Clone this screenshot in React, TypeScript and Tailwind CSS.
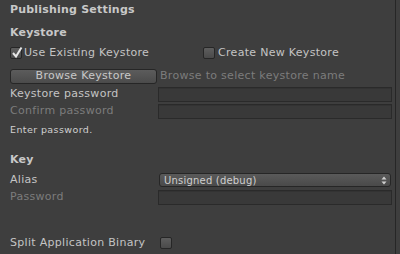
import React from "react";

const font = { fontFamily: '"DejaVu Sans", "Liberation Sans", sans-serif' };

function Check({ checked }: { checked?: boolean }) {
  return (
    <div className="relative w-[12px] h-[12px] rounded-[2px] border border-[#262626] bg-gradient-to-b from-[#5e5e5e] to-[#4a4a4a] shrink-0">
      {checked && (
        <svg className="absolute left-[0px] top-[-2px]" width="12" height="13" viewBox="0 0 12 13">
          <path d="M2 7 L5 10.5 L10.5 1.5" stroke="#e6e6e6" strokeWidth="2" fill="none" />
        </svg>
      )}
    </div>
  );
}

function Field() {
  return <div className="w-[234px] h-[15px] bg-[#393939] border border-[#2a2a2a] shadow-[inset_0_1px_0_#333]" />;
}

export default function App() {
  return (
    <div className="relative w-[400px] h-[254px] bg-[#3e3e3e] overflow-hidden text-[11px] tracking-[0.3px] text-[#c4c4c4]" style={font}>
      <div className="absolute right-[4px] top-0 w-[1px] h-full bg-[#262626]" />
      <div className="flex flex-col pl-[10px] pt-[1px]">
        <div className="h-[18px] flex items-center font-bold text-[#c8c8c8] tracking-[0.2px]">Publishing Settings</div>
        <div className="h-[18px] mt-[5px] flex items-center font-bold text-[#c8c8c8] tracking-[0.2px]">Keystore</div>
        <div className="h-[14px] mt-[4px] flex items-center">
          <div className="w-[193px] flex items-center gap-[2px]">
            <Check checked />
            <span>Use Existing Keystore</span>
          </div>
          <div className="flex items-center gap-[3px]">
            <Check />
            <span>Create New Keystore</span>
          </div>
        </div>
        <div className="h-[15px] mt-[9px] flex items-center">
          <div className="w-[147px] h-[15px] rounded-[3px] border border-[#262626] bg-gradient-to-b from-[#5c5c5c] to-[#4b4b4b] flex items-center justify-center text-[#c8c8c8]">
            Browse Keystore
          </div>
          <span className="ml-[3px] text-[#7c7c7c]">Browse to select keystore name</span>
        </div>
        <div className="h-[15px] mt-[3px] flex items-center">
          <span className="w-[148px]">Keystore password</span>
          <Field />
        </div>
        <div className="h-[15px] mt-[2px] flex items-center">
          <span className="w-[148px] text-[#7c7c7c]">Confirm password</span>
          <Field />
        </div>
        <div className="h-[14px] mt-[4px] flex items-center text-[9.5px] tracking-[0.4px] text-[#d0d0d0]">Enter password.</div>
        <div className="h-[18px] mt-[14px] flex items-center font-bold text-[#c8c8c8] tracking-[0.2px]">Key</div>
        <div className="h-[14px] mt-[4px] flex items-center">
          <span className="w-[149px]">Alias</span>
          <div className="w-[232px] h-[14px] rounded-[3px] border border-[#262626] bg-gradient-to-b from-[#5a5a5a] to-[#4a4a4a] flex items-center justify-between pl-[4px] pr-[3px] text-[#cfcfcf] text-[10px] tracking-[0.2px]">
            <span>Unsigned (debug)</span>
            <svg width="6" height="9" viewBox="0 0 6 9">
              <path d="M0.5 3.5 L3 0.5 L5.5 3.5 Z M0.5 5.5 L3 8.5 L5.5 5.5 Z" fill="#cfcfcf" />
            </svg>
          </div>
        </div>
        <div className="h-[15px] mt-[3px] flex items-center">
          <span className="w-[148px] text-[#7c7c7c]">Password</span>
          <Field />
        </div>
        <div className="h-[12px] mt-[32px] flex items-center">
          <span className="w-[150px]">Split Application Binary</span>
          <Check />
        </div>
      </div>
    </div>
  );
}
